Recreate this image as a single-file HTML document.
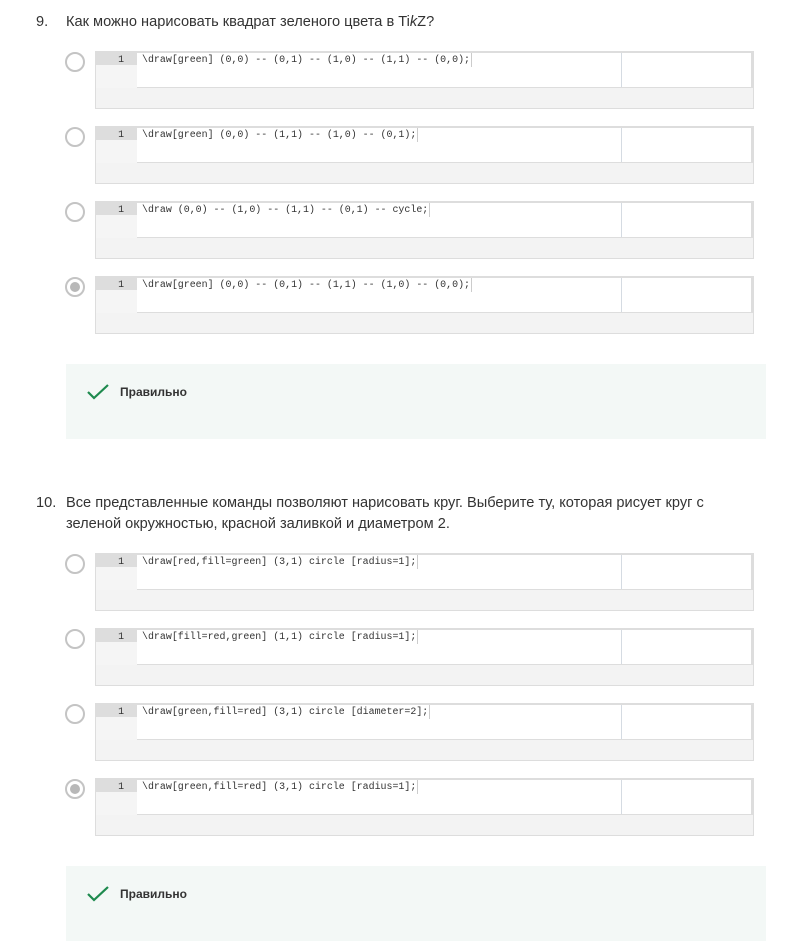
<!DOCTYPE html>
<html><head><meta charset="utf-8"><style>
body{margin:0;width:812px;height:939px;background:#fff;position:relative;overflow:hidden;font-family:"Liberation Sans",sans-serif;color:#333}
.q{position:absolute;font-size:14.6px;line-height:21px}
.num{position:absolute;left:36px}
.qt{position:absolute;left:66px;width:660px}
.radio{position:absolute;left:65px;width:16px;height:16px;border:2px solid #c4c4c4;border-radius:50%;background:#fff}
.radio.on::after{content:"";position:absolute;left:3px;top:3px;width:10px;height:10px;border-radius:50%;background:#b8b8b8}
.box{position:absolute;left:95px;width:657px;height:55px;border:1px solid #ddd;border-top:2px solid #ddd;background:#f3f3f3}
.ed{position:absolute;left:0;top:0;width:657px;height:35px;background:#fff;border-bottom:1px solid #ddd;border-right:2px solid #ddd;box-sizing:border-box}
.gut{position:absolute;left:0;top:0;width:41px;height:35px;background:#f5f5f5}
.gl{position:absolute;left:0;top:0;width:41px;height:12px;background:#ddd;font:9.9px "Liberation Mono",monospace;line-height:14px;text-align:right;box-sizing:border-box;padding-right:13px;color:#333}
.code{position:absolute;left:46px;top:0;font:9.95px "Liberation Mono",monospace;line-height:14px;color:#333;white-space:pre;border-right:1px solid #ccc;padding-right:1px}
.vl{position:absolute;left:525px;top:0;width:1px;height:34px;background:#d5dbe2}
.fb{position:absolute;left:66px;width:700px;height:75px;background:#f3f8f6}
.fb span{position:absolute;left:54px;top:21px;font-size:12px;font-weight:bold;color:#333}
.fb svg{position:absolute;left:20px;top:19px}
</style></head><body>
<div class="q" style="top:12px"><span class="num">9.</span><span class="qt">Как можно нарисовать квадрат зеленого цвета в Ti<i>k</i>Z?</span></div>

<div class="radio" style="top:52px"></div>
<div class="box" style="top:51px"><div class="ed"><div class="gut"><div class="gl">1</div></div><div class="code">\draw[green] (0,0) -- (0,1) -- (1,0) -- (1,1) -- (0,0);</div><div class="vl"></div></div></div>
<div class="radio" style="top:127px"></div>
<div class="box" style="top:126px"><div class="ed"><div class="gut"><div class="gl">1</div></div><div class="code">\draw[green] (0,0) -- (1,1) -- (1,0) -- (0,1);</div><div class="vl"></div></div></div>
<div class="radio" style="top:202px"></div>
<div class="box" style="top:201px"><div class="ed"><div class="gut"><div class="gl">1</div></div><div class="code">\draw (0,0) -- (1,0) -- (1,1) -- (0,1) -- cycle;</div><div class="vl"></div></div></div>
<div class="radio on" style="top:277px"></div>
<div class="box" style="top:276px"><div class="ed"><div class="gut"><div class="gl">1</div></div><div class="code">\draw[green] (0,0) -- (0,1) -- (1,1) -- (1,0) -- (0,0);</div><div class="vl"></div></div></div>

<div class="fb" style="top:364px"><svg width="24" height="18" viewBox="0 0 24 18"><path d="M2 9 L8 15 L22 2" fill="none" stroke="#1e8a4e" stroke-width="2.2"/></svg><span>Правильно</span></div>

<div class="q" style="top:493px"><span class="num">10.</span><span class="qt">Все представленные команды позволяют нарисовать круг. Выберите ту, которая рисует круг с зеленой окружностью, красной заливкой и диаметром 2.</span></div>

<div class="radio" style="top:554px"></div>
<div class="box" style="top:553px"><div class="ed"><div class="gut"><div class="gl">1</div></div><div class="code">\draw[red,fill=green] (3,1) circle [radius=1];</div><div class="vl"></div></div></div>
<div class="radio" style="top:629px"></div>
<div class="box" style="top:628px"><div class="ed"><div class="gut"><div class="gl">1</div></div><div class="code">\draw[fill=red,green] (1,1) circle [radius=1];</div><div class="vl"></div></div></div>
<div class="radio" style="top:704px"></div>
<div class="box" style="top:703px"><div class="ed"><div class="gut"><div class="gl">1</div></div><div class="code">\draw[green,fill=red] (3,1) circle [diameter=2];</div><div class="vl"></div></div></div>
<div class="radio on" style="top:779px"></div>
<div class="box" style="top:778px"><div class="ed"><div class="gut"><div class="gl">1</div></div><div class="code">\draw[green,fill=red] (3,1) circle [radius=1];</div><div class="vl"></div></div></div>

<div class="fb" style="top:866px"><svg width="24" height="18" viewBox="0 0 24 18"><path d="M2 9 L8 15 L22 2" fill="none" stroke="#1e8a4e" stroke-width="2.2"/></svg><span>Правильно</span></div>
</body></html>
